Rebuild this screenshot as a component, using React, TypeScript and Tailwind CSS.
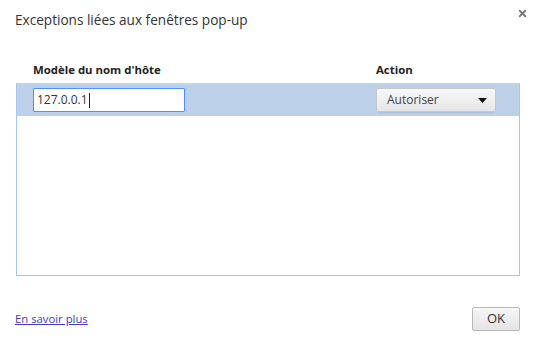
import { X } from "lucide-react";

const font = { fontFamily: '"Open Sans", "Noto Sans", Arial, sans-serif' };

export default function App() {
  return (
    <div
      className="relative flex h-[343px] w-[537px] flex-col bg-white text-[#333]"
      style={font}
    >
      {/* Title */}
      <div className="flex h-[42px] items-start justify-between pl-[15px] pr-[9px] pt-[10px]">
        <h1 className="text-[13.6px] leading-[20px] text-[#333]">
          Exceptions liées aux fenêtres pop-up
        </h1>
        <button className="mt-[-2px] text-[#777]">
          <X size={11} strokeWidth={4} />
        </button>
      </div>

      {/* Table */}
      <div className="flex flex-col px-[16px] pt-[20px]">
        <div className="flex h-[21px] items-start text-[11.4px] font-bold leading-[16px] text-[#222]">
          <span className="ml-[17px] w-[343px]">Modèle du nom d'hôte</span>
          <span>Action</span>
        </div>
        <div className="h-[193px] w-[504px] border border-t-[#d6d6d6] border-x-[#a3c6f2] border-b-[#a3c6f2]">
          <div className="flex h-[32px] items-center bg-[#bcd0e9] pl-[16px]">
            <div className="flex h-[24px] w-[152px] items-center rounded-[1px] border border-[#4d90fe] bg-white pl-[3px] text-[12px] text-[#333]">
              127.0.0.1
              <span className="ml-[1px] h-[15px] w-px bg-[#222]" />
            </div>
            <div className="ml-[191px] flex h-[24px] w-[120px] items-center justify-between rounded-[2px] border border-[#c8c8c8] bg-gradient-to-b from-[#f8f8f8] to-[#e6e6e6] pl-[10px] pr-[8px] text-[12px] text-[#444] shadow-[0_1px_0_rgba(0,0,0,0.08)]">
              Autoriser
              <svg width="9" height="5" viewBox="0 0 9 5">
                <path d="M0 0h9L4.5 5z" fill="#111" />
              </svg>
            </div>
          </div>
        </div>
      </div>

      {/* Footer */}
      <div className="mt-auto flex items-center justify-between pb-[12px] pl-[15px] pr-[17px]">
        <a className="text-[11.3px] text-[#3c3cc6] underline">En savoir plus</a>
        <button className="h-[24px] w-[48px] rounded-[2px] border border-[#b8b8b8] bg-gradient-to-b from-[#f6f6f6] to-[#e4e4e4] text-[13px] text-[#333]">
          OK
        </button>
      </div>
    </div>
  );
}
